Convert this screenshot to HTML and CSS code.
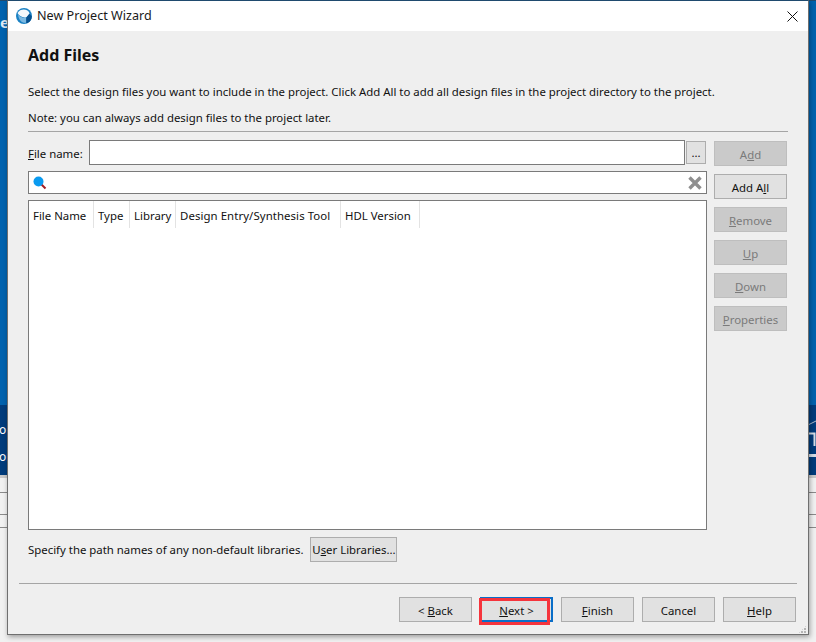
FILE: index.html
```html
<!DOCTYPE html>
<html lang="en">
<head>
<meta charset="utf-8">
<title>New Project Wizard</title>
<link rel="stylesheet" href="styles.css">
</head>
<body>
<div class="desktop">
  <div class="bg-blue"></div>
  <div class="bg-navy">
    <span class="bg-left">o<br>or</span>
    <svg class="bg-mark" viewBox="0 0 8 40" width="8" height="40"><path d="M0 5L8 1" stroke="#aebccd" stroke-width="1" fill="none"/><path d="M0 13.5H6.5V26" stroke="#d5dde6" stroke-width="2" fill="none"/><path d="M0 35.5H8" stroke="#d5dde6" stroke-width="3" fill="none"/></svg>
  </div>
  <div class="bg-rows"><div class="bg-row r1"></div><div class="bg-row r2"></div><div class="bg-row r3"></div><div class="bg-row r4"></div></div>
  <span class="bg-e">e</span>
  <div class="window">
    <div class="titlebar">
      <svg class="app-icon" viewBox="0 0 16 16" width="16" height="16"><circle cx="8" cy="8" r="8" fill="#1b82c4"/><path d="M1.5 5C3.5 1.5 8 .8 11 2.2C12.5 3 13.4 4.2 13.5 5.6L10.5 9.5C7.5 9.7 4 9 1.5 5Z" fill="#f4f8fb"/><path d="M2 6.5C4 9 7 10.5 10.5 10V14.5C7 15.6 3 13.5 2 6.5Z" fill="#7cb9e2"/><path d="M10.2 9.5L13.6 5.8L15.8 8.5C15.8 11 14.5 13.5 11.5 15L10.2 15Z" fill="#06508f"/></svg>
      <span class="title">New Project Wizard</span>
      <svg class="close" viewBox="0 0 11 11" width="11" height="11"><path d="M.5.5l10 10M10.5.5l-10 10" stroke="#111" stroke-width="1" fill="none"/></svg>
    </div>
    <div class="body">
      <div class="main">
        <h1 class="heading">Add Files</h1>
        <p class="desc">Select the design files you want to include in the project. Click Add All to add all design files in the project directory to the project.</p>
        <p class="note">Note: you can always add design files to the project later.</p>
        <hr class="rule top-rule">
        <div class="columns">
          <div class="left">
            <div class="file-row">
              <label class="file-label"><u>F</u>ile name:</label>
              <div class="input file-input"></div>
              <button class="btn browse">...</button>
            </div>
            <div class="input search">
              <svg viewBox="0 0 14 14" width="14" height="14"><path d="M8.5 8.5l4 4" stroke="#a01c22" stroke-width="2"/><circle cx="5.5" cy="5.5" r="5" fill="#0a9bf0"/></svg>
              <svg class="clear" viewBox="0 0 14 14" width="14" height="14"><path d="M1.5 1.5l11 11M12.5 1.5l-11 11" stroke="#8f8f8f" stroke-width="3.4"/></svg>
            </div>
            <div class="table">
              <div class="thead">
                <span class="th col-name">File Name</span>
                <span class="th col-type">Type</span>
                <span class="th col-lib">Library</span>
                <span class="th col-tool">Design Entry/Synthesis Tool</span>
                <span class="th col-hdl">HDL Version</span>
              </div>
            </div>
          </div>
          <div class="side">
            <button class="btn side-btn off">A<u>d</u>d</button>
            <button class="btn side-btn">Add A<u>l</u>l</button>
            <button class="btn side-btn off"><u>R</u>emove</button>
            <button class="btn side-btn off"><u>U</u>p</button>
            <button class="btn side-btn off"><u>D</u>own</button>
            <button class="btn side-btn off"><u>P</u>roperties</button>
          </div>
        </div>
        <div class="lib-row">
          <span>Specify the path names of any non-default libraries.</span>
          <button class="btn lib-btn">U<u>s</u>er Libraries...</button>
        </div>
      </div>
      <hr class="rule bottom-rule">
      <div class="footer">
        <button class="btn foot-btn">&lt; <u>B</u>ack</button>
        <button class="btn foot-btn next"><u>N</u>ext &gt;</button>
        <button class="btn foot-btn"><u>F</u>inish</button>
        <button class="btn foot-btn">Cancel</button>
        <button class="btn foot-btn"><u>H</u>elp</button>
      </div>
      <div class="grip"></div>
    </div>
  </div>
</div>
</body>
</html>
```
FILE: styles.css
```css
* { box-sizing: border-box; }
html, body { margin: 0; padding: 0; }
body { width: 816px; height: 642px; overflow: hidden; background: #f3f3f3; font-family: "Noto Sans", "Open Sans", sans-serif; font-size: 11.4px; color: #111; }
.desktop { position: relative; width: 816px; height: 642px; overflow: hidden; }
.bg-blue { position: absolute; left: 0; top: 0; width: 816px; height: 405px; background: #0062ae; border-top: 1px solid #1f4a6e; }
.bg-navy { position: absolute; left: 0; top: 405px; width: 816px; height: 70px; background: #013c7c; color: #fff; }
.bg-left { position: absolute; left: -1px; top: 11px; font-size: 12px; line-height: 27px; }
.bg-mark { position: absolute; right: 0; top: 15px; }
.bg-e { position: absolute; left: 0; top: 12px; color: #dfe9f3; font-size: 15px; font-weight: 700; }
.bg-rows { position: absolute; left: 0; top: 475px; width: 816px; height: 167px; background: #f1f1f1; }
.bg-row { position: absolute; left: 0; height: 1px; width: 816px; }
.r1 { top: 0; height: 3px; background: #c9c9c9; }
.r2 { top: 17px; background: #8a8a8a; }
.r3 { top: 39px; background: #8a8a8a; }
.r4 { top: 52px; background: #8a8a8a; }
.window { position: absolute; left: 7px; top: 0; width: 802px; height: 635px; border: 1px solid #6f6f6f; border-top-color: #1f4a6e; background: #efefef; display: flex; flex-direction: column; box-shadow: 1px 2px 5px rgba(0,0,0,.35); }
.titlebar { height: 30px; background: #fff; display: flex; align-items: center; padding: 0 10px 0 8px; flex: none; }
.app-icon { flex: none; }
.title { margin-left: 5px; font-size: 12.6px; color: #1a1a1a; margin-top: -1px; }
.close { margin-left: auto; }
.body { position: relative; flex: 1; display: flex; flex-direction: column; padding: 0 11px; }
.main { flex: 1; padding: 0 9px 0 9px; display: flex; flex-direction: column; }
.heading { margin: 13px 0 0; font-size: 16px; line-height: 22px; font-weight: 700; color: #111; }
.desc { margin: 18px 0 0; line-height: 16px; white-space: nowrap; }
.note { margin: 10px 0 0; line-height: 16px; }
.rule { border: 0; height: 1px; background: #a5a5a5; margin: 0; }
.top-rule { margin-top: 5px; }
.columns { display: flex; margin-top: 8px; gap: 7px; }
.left { width: 679px; display: flex; flex-direction: column; }
.file-row { display: flex; align-items: center; height: 25px; }
.file-label { width: 61px; flex: none; padding-top: 2px; }
.input { background: #fff; border: 1px solid #7a7a7a; }
.file-input { width: 596px; height: 25px; }
.btn { font: inherit; color: #111; background: #e1e1e1; border: 1px solid #adadad; padding: 0; display: block; white-space: nowrap; }
.browse { width: 20px; height: 23px; margin-left: 1px; }
.search { height: 23px; margin-top: 6px; display: flex; align-items: center; justify-content: space-between; padding: 0 4px 0 4px; }
.table { height: 330px; margin-top: 6px; background: #fff; border: 1px solid #7a7a7a; }
.thead { display: flex; height: 27px; }
.th { padding: 0 0 0 4px; line-height: 29px; border-right: 1px solid #e3e3e3; white-space: nowrap; }
.col-name { width: 65px; }
.col-type { width: 36px; }
.col-lib { width: 46px; }
.col-tool { width: 165px; letter-spacing: .08px; }
.col-hdl { width: 79px; }
.side { width: 73px; display: flex; flex-direction: column; gap: 8px; padding-top: 1px; }
.side-btn { width: 73px; height: 25px; text-align: center; padding-top: 2px; }
.off { background: #cacaca; border-color: #bebebe; color: #7a7a7a; }
.lib-row { display: flex; align-items: center; gap: 7px; margin-top: 7px; }
.lib-btn { width: 87px; height: 25px; }
.bottom-rule { margin-top: 20px; }
.footer { display: flex; justify-content: flex-end; gap: 8px; padding: 13px 1px 0 0; height: 50px; flex: none; }
.foot-btn { width: 73px; height: 25px; padding-top: 2px; }
.next { position: relative; border: 2px solid #0a6ec8; }
.next::after { content: ""; box-sizing: border-box; position: absolute; left: -3px; top: -1px; width: 71px; height: 27px; border: 3px solid #f5343c; }
.grip { position: absolute; right: 1px; bottom: 0; width: 9px; height: 9px; background-image: radial-gradient(circle at 1px 1px, #b5b5b5 1px, transparent 1.2px); background-size: 3px 3px; clip-path: polygon(100% 0, 100% 100%, 0 100%); }
```
